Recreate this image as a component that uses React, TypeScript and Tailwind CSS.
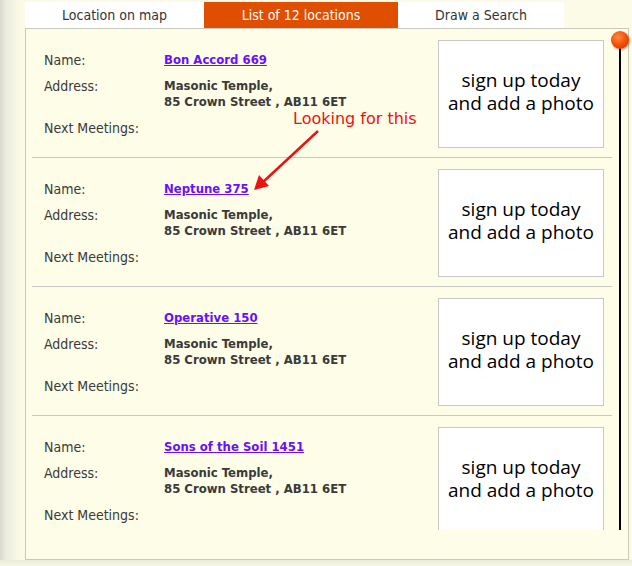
import React from "react";

const rows = ["Bon Accord 669", "Neptune 375", "Operative 150", "Sons of the Soil 1451"];

function Row({ name, last }: { name: string; last?: boolean }) {
  return (
    <div className={`flex h-[129px] shrink-0 ${last ? "" : "border-b border-[#c8c8c8]"}`}>
      <div className="w-[406px] pl-[12px] pt-[23px] text-[14px] leading-[16px] text-[#3a3a3a]">
        <div className="flex h-[26px]">
          <div className="w-[120px]">Name:</div>
          <a className="text-[13px] font-bold text-[#6a0fff] underline">{name}</a>
        </div>
        <div className="flex h-[42px]">
          <div className="w-[120px]">Address:</div>
          <div className="text-[13px] font-bold text-[#3a3a3a]">
            Masonic Temple,
            <br />
            85 Crown Street , AB11 6ET
          </div>
        </div>
        <div>Next Meetings:</div>
      </div>
      <div className="mt-[11px] flex h-[108px] w-[166px] flex-col items-center justify-center border border-[#c8c8c8] bg-white pb-[4px] text-[19px] font-medium leading-[23px] text-black [font-family:'Open_Sans',sans-serif]">
        <div>sign up today</div>
        <div>and add a photo</div>
      </div>
    </div>
  );
}

export default function App() {
  return (
    <div
      className="relative h-[566px] w-[632px] overflow-hidden bg-[linear-gradient(to_right,#d8d8cc_0px,#ecece0_6px,#f8f8e4_18px,#fbfbe7_26px)] pt-[2px] [font-family:'DejaVu_Sans_Condensed','DejaVu_Sans',sans-serif]"
    >
      <div className="ml-[25px] flex h-[26px] w-[539px] bg-white text-[14px] text-[#333]">
        <div className="flex w-[179px] items-center justify-center">Location on map</div>
        <div className="flex w-[194px] items-center justify-center bg-[#e04e00] text-white">List of 12 locations</div>
        <div className="flex w-[166px] items-center justify-center">Draw a Search</div>
      </div>
      <div className="relative ml-[25px] h-[532px] w-[604px] border border-[#c9c9bd] bg-[#fdfde8]">
        <div className="ml-[6px] flex h-[501px] w-[580px] flex-col overflow-hidden">
          {rows.map((r, i) => (
            <Row key={r} name={r} last={i === rows.length - 1} />
          ))}
        </div>
        <div className="absolute left-[593px] top-[14px] h-[487px] w-[2px] bg-black" />
        <div className="absolute left-[585px] top-[2px] h-[18px] w-[18px] rounded-full bg-[radial-gradient(circle_at_40%_35%,#ff8a40,#f04a00_55%,#c83000)] shadow-[1px_1px_2px_rgba(0,0,0,0.35)]" />
      </div>
      <div className="absolute left-0 top-[560px] h-[6px] w-[632px] bg-[linear-gradient(to_bottom,#ececdc,#f6f6e4)]" />
      <div className="absolute left-[293px] top-[110px] text-[16px] leading-[18px] text-[#ee1111] [font-family:'DejaVu_Sans',sans-serif]">
        Looking for this
      </div>
      <svg className="absolute left-0 top-0" width="632" height="566">
        <line x1="318" y1="131" x2="262" y2="183" stroke="#ee1111" strokeWidth="2.5" />
        <polygon points="254,190 259,175 269,186" fill="#ee1111" />
      </svg>
    </div>
  );
}
